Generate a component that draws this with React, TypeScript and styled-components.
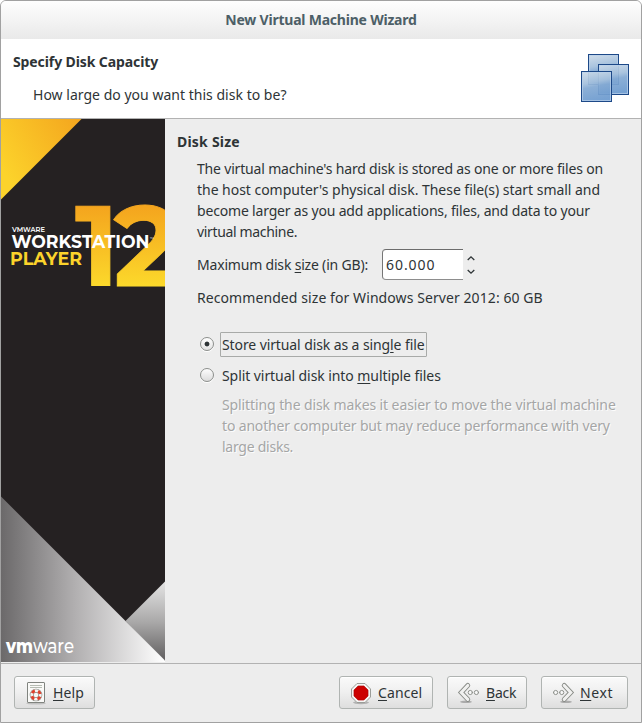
import React from 'react';
import styled, { createGlobalStyle } from 'styled-components';

const GlobalStyle = createGlobalStyle`
  * { box-sizing: border-box; }
  body { margin: 0; background: #fff; }
  svg { display: block; }
`;

const Window = styled.div`
  width: 642px;
  height: 723px;
  display: flex;
  flex-direction: column;
  overflow: hidden;
  border: 1px solid #a1a1a1;
  border-radius: 6px 6px 0 0;
  background: #ededed;
  color: #2e3436;
  font: 14px/21px "Noto Sans", sans-serif;
`;

const Track = styled.span<{ $track?: number }>`
  display: block;
  white-space: pre;
  letter-spacing: ${(p) => p.$track ?? 0}px;
`;

const Strong = styled(Track)`
  font-weight: 700;
`;

const TitleBar = styled.div`
  flex: none;
  height: 38px;
  padding-top: 8px;
  display: flex;
  justify-content: center;
  background: linear-gradient(#fefefe, #e9e9e9);
  color: #4d5f67;
`;

const Header = styled.header`
  flex: none;
  height: 80px;
  display: flex;
  justify-content: space-between;
  padding: 12px 11px 0 12px;
  background: #fff;
  border-bottom: 1px solid #b2b2b2;
`;

const Question = styled.div`
  padding: 12px 0 0 20px;
`;

const HeaderIcon = styled.div`
  padding-top: 3px;
`;

const Body = styled.div`
  flex: none;
  height: 544px;
  display: flex;
`;

const Banner = styled.aside`
  width: 164px;
  height: 543px;
  flex: none;
`;

const Content = styled.main`
  flex: 1;
  padding: 12px 0 0 12px;
`;

const Section = styled.div`
  padding: 6px 0 0 20px;
`;

const SizeRow = styled.div`
  display: flex;
  align-items: center;
  height: 31px;
  margin: 7px 0;
`;

const SizeLabel = styled.label`
  width: 185px;
`;

const SpinInput = styled.div`
  width: 81px;
  height: 31px;
  padding: 4px 0 0 3px;
  border: 1px solid #767676;
  border-color: #6c6c6c transparent #8d8d8d #767676;
  border-right: 0;
  border-radius: 4px 0 0 4px;
  background: #fff;
`;

const Arrows = styled.div`
  padding-left: 4px;
`;

const Recommended = styled.div`
  padding-bottom: 24px;
`;

const RadioRow = styled.div`
  display: flex;
  align-items: flex-start;
  height: 25px;
  margin-bottom: 6px;
  padding-left: 3px;
`;

const Radio = styled.span<{ $on?: boolean }>`
  width: 14px;
  height: 14px;
  margin: 5px 6px 0 0;
  border: 1px solid #8c8f8c;
  border-radius: 50%;
  box-shadow: 0 1px 0 #fff;
  background: ${(p) =>
    p.$on
      ? 'radial-gradient(circle, #2e3436 0 2px, transparent 2.8px), linear-gradient(#fff, #e2e2e2)'
      : 'linear-gradient(#fdfdfd, #dcdcdc)'};
`;

const RadioLabel = styled.span<{ $focused?: boolean }>`
  height: 25px;
  width: ${(p) => (p.$focused ? '207px' : 'auto')};
  padding: 1px 0 0 1px;
  border: 1px solid ${(p) => (p.$focused ? '#a8aaa8' : 'transparent')};
  border-radius: 1px;
`;

const Hint = styled.div`
  padding-left: 25px;
  color: #a5a6a6;
  text-shadow: 1px 1px 0 #fcfcfc;
`;

const Key = styled.span`
  text-decoration: underline;
  text-decoration-thickness: 1px;
  text-underline-offset: 2px;
`;

const Footer = styled.footer`
  flex: 1;
  display: flex;
  align-items: flex-start;
  gap: 14px;
  padding: 12px 13px 0;
  border-top: 1px solid #b2b2b2;
`;

const Button = styled.button<{ $width: number }>`
  width: ${(p) => p.$width}px;
  height: 33px;
  display: flex;
  align-items: center;
  gap: 5px;
  padding: 0 0 0 9px;
  border: 1px solid #b0b4b2;
  border-radius: 3px;
  background: linear-gradient(#fafafa, #efefef 50%, #dedede);
  box-shadow: inset 0 1px 0 #fff;
  color: inherit;
  font: inherit;
`;

const Spacer = styled.div`
  flex: 1;
`;

function MachinesIcon() {
  const squares = [[7, 0], [17, 10], [0, 17]];
  return (
    <svg width="49" height="49">
      <defs>
        <linearGradient id="glass" x1="0.1" y1="0" x2="0.3" y2="1">
          <stop offset="0" stopColor="#cddbe8" />
          <stop offset="0.4" stopColor="#a3bfdc" />
          <stop offset="0.55" stopColor="#83a9d3" />
          <stop offset="1" stopColor="#6d9bcf" />
        </linearGradient>
      </defs>
      {squares.map(([x, y]) => (
        <g key={x}>
          <rect x={x + 0.5} y={y + 0.5} width="30" height="30" fill="url(#glass)" fillOpacity="0.93" stroke="#1d4988" />
          <rect x={x + 1.5} y={y + 1.5} width="28" height="28" fill="none" stroke="#b9d0e9" strokeOpacity="0.7" />
        </g>
      ))}
    </svg>
  );
}

function BannerArt() {
  const face = 'Montserrat, Inter, sans-serif';
  return (
    <svg width="164" height="543" viewBox="0 0 164 543" fontFamily={face} fontWeight="700">
      <defs>
        <linearGradient id="corner" x1="0" y1="0.6" x2="1" y2="0">
          <stop offset="0" stopColor="#fcd32b" />
          <stop offset="1" stopColor="#f4a51e" />
        </linearGradient>
        <linearGradient id="digits" gradientUnits="userSpaceOnUse" x1="0" y1="88" x2="0" y2="168">
          <stop offset="0" stopColor="#f4a51e" />
          <stop offset="1" stopColor="#fcd92b" />
        </linearGradient>
        <linearGradient id="silver" gradientUnits="userSpaceOnUse" x1="0" y1="0" x2="164" y2="0">
          <stop offset="0" stopColor="#6b696a" />
          <stop offset="0.45" stopColor="#b1afb0" />
          <stop offset="1" stopColor="#ffffff" />
        </linearGradient>
        <linearGradient id="facet" x1="0" y1="0" x2="0" y2="1">
          <stop offset="0" stopColor="#e4e4e4" />
          <stop offset="0.5" stopColor="#aaa9a9" />
          <stop offset="1" stopColor="#5e5c5d" />
        </linearGradient>
      </defs>
      <rect width="164" height="543" fill="#252122" />
      <polygon points="0,0 80.5,0 0,80.5" fill="url(#corner)" />
      <polygon points="124.5,502 164,462.5 164,543" fill="url(#facet)" />
      <polygon points="0,377.5 164,541.5 164,543 0,543" fill="url(#silver)" />
      <g fill="url(#digits)" stroke="url(#digits)" strokeWidth="0.8" fontSize="113">
        <text x="74" y="167.3">1</text>
        <text x="112.5" y="167.3">2</text>
      </g>
      <g fill="#fff">
        <text x="11" y="113" fontSize="7.5" fontWeight="600" textLength="33" lengthAdjust="spacingAndGlyphs">VMWARE</text>
        <text x="10.5" y="129.3" fontSize="17.5" textLength="138" lengthAdjust="spacingAndGlyphs">WORKSTATION</text>
        <text x="149" y="121" fontSize="4" fontWeight="400">™</text>
        <text x="9" y="146.3" fontSize="17.5" fill="#fcd32b" fontWeight="700" textLength="72" lengthAdjust="spacingAndGlyphs">PLAYER</text>
        <text x="5" y="533.5" fontSize="20" fontWeight="800" textLength="27" lengthAdjust="spacingAndGlyphs">vm</text>
        <text x="32" y="533.5" fontSize="20" fontWeight="500" textLength="41" lengthAdjust="spacingAndGlyphs">ware</text>
      </g>
    </svg>
  );
}

function HelpIcon() {
  return (
    <svg width="24" height="24">
      <ellipse cx="12" cy="22.3" rx="10" ry="1.2" fill="#000" opacity="0.15" />
      <rect x="3.5" y="1.5" width="17" height="20" rx="0.5" fill="#fafaf8" stroke="#80847f" />
      <path d="M6 4.5H18M6 6.5H18" stroke="#b6bcb3" />
      <circle cx="12" cy="14" r="4.3" fill="none" stroke="#888a85" strokeWidth="4" />
      <circle cx="12" cy="14" r="4.3" fill="none" stroke="#f4f4f2" strokeWidth="2.8" />
      <circle cx="12" cy="14" r="4.3" fill="none" stroke="#e0402c" strokeWidth="2.8" strokeDasharray="3.377 3.377" strokeDashoffset="-1.69" />
    </svg>
  );
}

function StopIcon() {
  return (
    <svg width="24" height="24">
      <ellipse cx="12" cy="21.6" rx="8" ry="1.6" fill="#000" opacity="0.22" />
      <polygon points="8,2.5 16,2.5 21.5,8 21.5,16 16,21.5 8,21.5 2.5,16 2.5,8" fill="#f5f5f4" stroke="#9b9d99" />
      <polygon points="9.1,5 14.9,5 19,9.1 19,14.9 14.9,19 9.1,19 5,14.9 5,9.1" fill="#cc0000" stroke="#b00000" strokeWidth="0.7" />
    </svg>
  );
}

function ArrowIcon({ forward }: { forward?: boolean }) {
  return (
    <svg width="24" height="24">
      <g transform={forward ? 'translate(24 0) scale(-1 1)' : undefined} strokeLinecap="round" strokeLinejoin="miter" fill="none">
        <ellipse cx="9" cy="20.8" rx="6" ry="1.3" fill="#000" opacity="0.25" />
        <path d="M10.8 4.4L4.2 11.5L10.8 18.4" stroke="#878a85" strokeWidth="4.8" />
        <path d="M10.8 4.4L4.2 11.5L10.8 18.4" stroke="#f1f1f0" strokeWidth="3" />
        <circle cx="13.3" cy="11.5" r="2.1" fill="#f8f8f8" stroke="#8f928d" />
        <circle cx="19.4" cy="11.5" r="2.1" fill="#f8f8f8" stroke="#8f928d" />
      </g>
    </svg>
  );
}

export default function App() {
  return (
    <>
      <GlobalStyle />
      <Window>
        <TitleBar>
          <Strong $track={-0.22}>New Virtual Machine Wizard</Strong>
        </TitleBar>
        <Header>
          <div>
            <Strong $track={-0.1}>Specify Disk Capacity</Strong>
            <Question>
              <Track $track={0.02}>How large do you want this disk to be?</Track>
            </Question>
          </div>
          <HeaderIcon>
            <MachinesIcon />
          </HeaderIcon>
        </Header>
        <Body>
          <Banner>
            <BannerArt />
          </Banner>
          <Content>
            <Strong $track={0.22}>Disk Size</Strong>
            <Section>
              <Track $track={-0.18}>The virtual machine's hard disk is stored as one or more files on</Track>
              <Track $track={-0.03}>the host computer's physical disk. These file(s) start small and</Track>
              <Track $track={-0.18}>become larger as you add applications, files, and data to your</Track>
              <Track $track={-0.34}>virtual machine.</Track>
              <SizeRow>
                <SizeLabel>
                  <Track $track={-0.19}>
                    Maximum disk <Key>s</Key>ize (in GB):
                  </Track>
                </SizeLabel>
                <SpinInput>
                  <Track $track={0.95}>60.000</Track>
                </SpinInput>
                <Arrows>
                  <svg width="8" height="20" fill="none" stroke="#2e3436" strokeWidth="1.3">
                    <path d="M0.7 5L4 1.8L7.3 5M0.7 15L4 18.2L7.3 15" />
                  </svg>
                </Arrows>
              </SizeRow>
              <Recommended>
                <Track $track={0.08}>Recommended size for Windows Server 2012: 60 GB</Track>
              </Recommended>
              <RadioRow>
                <Radio $on />
                <RadioLabel $focused>
                  <Track $track={-0.1}>
                    Store virtual disk as a sing<Key>l</Key>e file
                  </Track>
                </RadioLabel>
              </RadioRow>
              <RadioRow>
                <Radio />
                <RadioLabel>
                  <Track $track={-0.07}>
                    Split virtual disk into <Key>m</Key>ultiple files
                  </Track>
                </RadioLabel>
              </RadioRow>
              <Hint>
                <Track $track={-0.1}>Splitting the disk makes it easier to move the virtual machine</Track>
                <Track $track={-0.16}>to another computer but may reduce performance with very</Track>
                <Track $track={-0.25}>large disks.</Track>
              </Hint>
            </Section>
          </Content>
        </Body>
        <Footer>
          <Button $width={81}>
            <HelpIcon />
            <Track $track={0.1}><Key>H</Key>elp</Track>
          </Button>
          <Spacer />
          <Button $width={94}>
            <StopIcon />
            <Track $track={0.1}><Key>C</Key>ancel</Track>
          </Button>
          <Button $width={80}>
            <ArrowIcon />
            <Track $track={-0.2}><Key>B</Key>ack</Track>
          </Button>
          <Button $width={87}>
            <ArrowIcon forward />
            <Track $track={0.6}><Key>N</Key>ext</Track>
          </Button>
        </Footer>
      </Window>
    </>
  );
}
